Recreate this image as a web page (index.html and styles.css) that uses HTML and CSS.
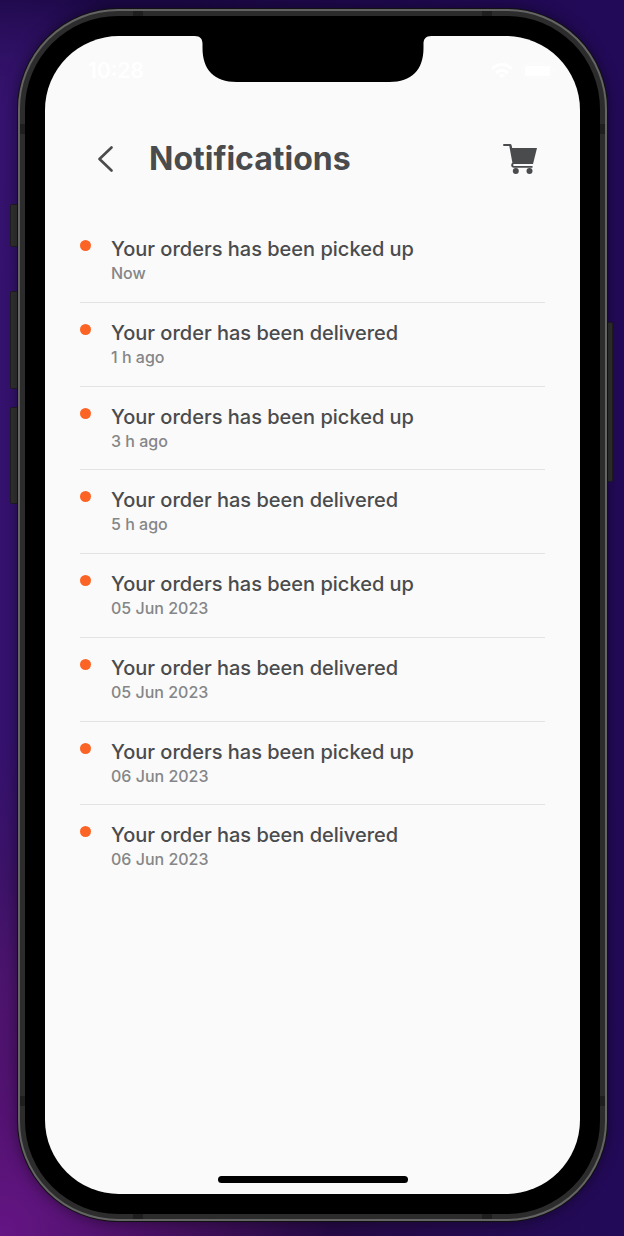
FILE: index.html
```
<!DOCTYPE html>
<html lang="en">
<head>
<meta charset="utf-8">
<meta name="viewport" content="width=device-width, initial-scale=1">
<title>Notifications</title>
<link rel="stylesheet" href="styles.css">
</head>
<body>
<div class="phone">
  <span class="side-button mute"></span>
  <span class="side-button volume-up"></span>
  <span class="side-button volume-down"></span>
  <span class="side-button power"></span>
  <span class="band top left"></span>
  <span class="band top right"></span>
  <span class="band bottom left"></span>
  <span class="band bottom right"></span>
  <span class="band side upper left"></span>
  <span class="band side upper right"></span>
  <span class="band side lower left"></span>
  <span class="band side lower right"></span>
  <div class="bezel">
    <div class="screen">
      <svg class="notch" viewBox="0 0 237 47" aria-hidden="true"><path d="M0 0V1C6 1 8 4 8 9V13C8 35 20 47 42 47H195C217 47 229 35 229 13V9C229 4 231 1 237 1V0Z"/></svg>
      <div class="status">
        <span class="time">10:28</span>
        <span class="indicators">
          <svg width="22" height="16" viewBox="0 0 22 16" fill="none" stroke="#fff" stroke-width="3" aria-hidden="true"><path d="M1 6C7 0 15 0 21 6M5 10C9 6.500 13 6.500 17 10"/><path d="M8 12Q11 10 14 12L11 15Z" fill="#fff" stroke="none"/></svg>
          <svg width="34" height="16" viewBox="0 0 34 16" aria-hidden="true"><rect x="1" y="1" width="29" height="14" rx="4" fill="none" stroke="#fcfcfc"/><rect x="3" y="3" width="25" height="10" rx="2" fill="#fff"/><path d="M32 5Q34 8 32 11Z" fill="#fcfcfc"/></svg>
        </span>
      </div>
      <header class="header">
        <button class="icon-button" type="button" aria-label="Back"><svg width="16" height="26" viewBox="0 0 16 26" fill="none" stroke="#4a4b4d" stroke-width="2.600" stroke-linecap="round" stroke-linejoin="round"><path d="M13.500 1.500L1.500 13L13.500 24.500"/></svg></button>
        <h1 class="title">Notifications</h1>
        <button class="icon-button" type="button" aria-label="Cart"><svg width="34" height="30" viewBox="0 0 34 30" fill="#4a4b4d"><path d="M1 0H7Q8.300 0 8.600 1.300L9.200 4H34L30 20H11.500Q10 20 10 21T11.500 22H29.500V23.700H11Q8.200 23.700 8.200 21Q8.200 19.500 9.400 18.800L6.300 2H1Q0 2 0 1T1 0Z"/><circle cx="12.800" cy="27" r="3"/><circle cx="26.500" cy="27" r="3"/></svg></button>
      </header>
      <main>
        <ul class="list">
          <li class="item"><span class="dot"></span><div><p class="message">Your orders has been picked up</p><p class="when">Now</p></div></li>
          <li class="item"><span class="dot"></span><div><p class="message">Your order has been delivered</p><p class="when">1 h ago</p></div></li>
          <li class="item"><span class="dot"></span><div><p class="message">Your orders has been picked up</p><p class="when">3 h ago</p></div></li>
          <li class="item"><span class="dot"></span><div><p class="message">Your order has been delivered</p><p class="when">5 h ago</p></div></li>
          <li class="item"><span class="dot"></span><div><p class="message">Your orders has been picked up</p><p class="when">05 Jun 2023</p></div></li>
          <li class="item"><span class="dot"></span><div><p class="message">Your order has been delivered</p><p class="when">05 Jun 2023</p></div></li>
          <li class="item"><span class="dot"></span><div><p class="message">Your orders has been picked up</p><p class="when">06 Jun 2023</p></div></li>
          <li class="item"><span class="dot"></span><div><p class="message">Your order has been delivered</p><p class="when">06 Jun 2023</p></div></li>
        </ul>
      </main>
      <span class="home-bar"></span>
    </div>
  </div>
</div>
</body>
</html>
```
FILE: styles.css
```
* { box-sizing: border-box; }

body {
  margin: 0;
  min-height: 100vh;
  padding: 9px 17px 15px 18px;
  display: flex;
  font-family: Inter, sans-serif;
  color: #4a4b4d;
  background:
    radial-gradient(ellipse 330px 360px at 0 100%, #651585, transparent),
    radial-gradient(ellipse 160px 160px at 0 10%, #35136e, transparent),
    linear-gradient(90deg, transparent 30%, #230a59 100%),
    linear-gradient(#1b0845 0, #35126e 10%, #35126e 60%, #421464 80%, #260a3c 100%);
}

.phone {
  position: relative;
  flex: 1;
  display: flex;
  padding: 5px;
  border: 2px solid #646464;
  border-radius: 100px;
  background: #2c2c2c;
  box-shadow: 0 0 0 1px #111, 0 0 14px 2px rgba(0, 0, 0, 0.4);
}

.bezel {
  flex: 1;
  display: flex;
  padding: 20px;
  border-radius: 93px;
  background: #000;
}

.screen {
  position: relative;
  flex: 1;
  display: flex;
  flex-direction: column;
  padding: 22px 35px 11px;
  border-radius: 74px;
  background: #fafafa;
}

.notch {
  position: absolute;
  top: -1px;
  left: 50%;
  width: 237px;
  height: 47px;
  transform: translateX(-50%);
}

.status {
  display: flex;
  justify-content: space-between;
  align-items: center;
  height: 26px;
  padding-left: 8px;
  color: #fff;
}

.time { font-size: 21px; font-weight: 600; line-height: 24px; }
.indicators { display: flex; gap: 9px; margin-right: -11px; }

.header {
  display: flex;
  align-items: center;
  height: 40px;
  margin-top: 55px;
  padding: 0 8px 0 18px;
}

.icon-button {
  display: flex;
  padding: 0;
  border: 0;
  background: none;
  cursor: pointer;
}

.title {
  flex: 1;
  margin: 0 0 0 35px;
  font-size: 32px;
  line-height: 40px;
  font-weight: 700;
}

.list {
  display: grid;
  grid-auto-rows: 1fr;
  min-height: 670px;
  margin: 40px 0 0;
  padding: 0;
  list-style: none;
}

.item {
  display: flex;
  align-items: flex-start;
  gap: 20px;
  padding-top: 18px;
  border-bottom: 1px solid #e3e3e3;
}

.item:last-child { border-bottom-color: transparent; }

.dot {
  width: 11px;
  height: 11px;
  margin-top: 3px;
  border-radius: 50%;
  background: #fc6426;
}

.message, .when { margin: 0; line-height: 24px; }
.message { font-size: 20px; font-weight: 500; }
.when { font-size: 16px; font-weight: 500; color: #858687; }

.home-bar {
  width: 190px;
  height: 7px;
  margin: auto auto 0;
  border-radius: 4px;
  background: #000;
}

.side-button {
  position: absolute;
  z-index: -1;
  left: -10px;
  width: 10px;
  border: 1px solid #202020;
  border-radius: 2px 0 0 2px;
  background: #333;
}

.mute { top: 193px; height: 43px; }
.volume-up { top: 280px; height: 98px; }
.volume-down { top: 396px; height: 97px; }
.power {
  top: 311px;
  left: auto;
  right: -8px;
  width: 7px;
  height: 160px;
  border-radius: 0 2px 2px 0;
}

.band { position: absolute; width: 10px; height: 5px; background: #1e1e1e; }
.top { top: 0; }
.bottom { bottom: 0; }
.top.left, .bottom.left { left: 113px; }
.top.right, .bottom.right { right: 113px; }
.side { width: 5px; height: 10px; }
.side.left { left: 0; }
.side.right { right: 0; }
.upper { top: 113px; }
.lower { bottom: 113px; }
```
